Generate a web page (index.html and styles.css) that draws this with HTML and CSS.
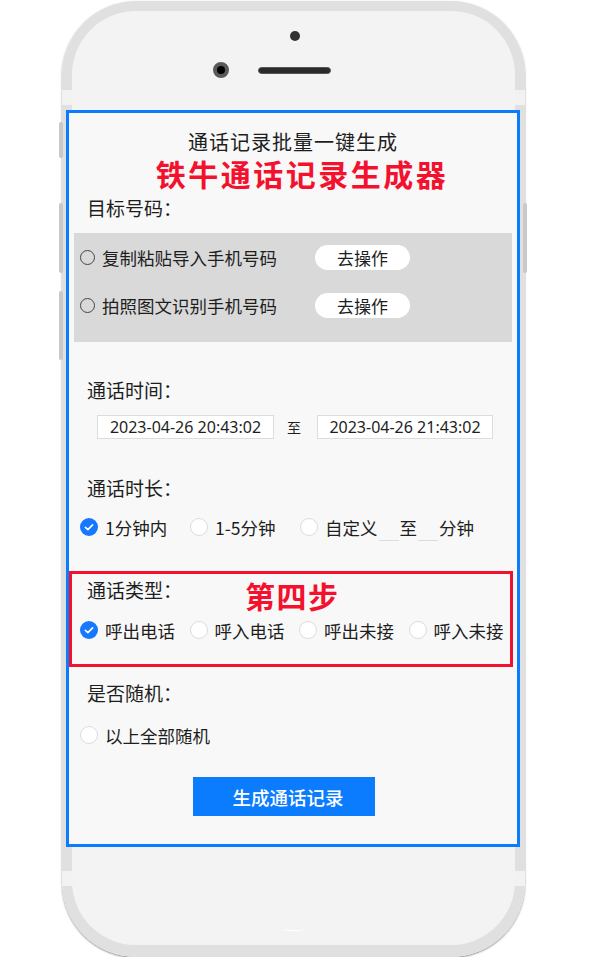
FILE: index.html
```html
<!DOCTYPE html>
<html lang="zh-CN">
<head>
    <meta charset="UTF-8">
    <meta name="viewport" content="width=device-width, initial-scale=1.0">
    <title>铁牛通话记录生成器</title>
    <link rel="stylesheet" href="styles.css">
</head>
<body>
    <div class="phone">
        <span class="side-btn btn-mute"></span>
        <span class="side-btn btn-vol-up"></span>
        <span class="side-btn btn-vol-down"></span>
        <span class="side-btn btn-power"></span>

        <div class="face">
            <div class="sensor"></div>
            <div class="earpiece">
                <span class="camera"></span>
                <span class="speaker"></span>
            </div>

            <div class="screen">
                <h1 class="title">通话记录批量一键生成</h1>
                <h2 class="brand">铁牛通话记录生成器</h2>

                <div class="label">目标号码：</div>
                <div class="import-box">
                    <div class="import-row">
                        <span class="ring"></span>
                        <span class="import-text">复制粘贴导入手机号码</span>
                        <button class="go-btn">去操作</button>
                    </div>
                    <div class="import-row">
                        <span class="ring"></span>
                        <span class="import-text">拍照图文识别手机号码</span>
                        <button class="go-btn">去操作</button>
                    </div>
                </div>

                <div class="label label-time">通话时间：</div>
                <div class="date-row">
                    <div class="date-box">2023-04-26 20:43:02</div>
                    <span class="to">至</span>
                    <div class="date-box date-end">2023-04-26 21:43:02</div>
                </div>

                <div class="label label-len">通话时长：</div>
                <div class="opts">
                    <label class="opt">
                        <svg class="dot-on" width="18" height="18" viewBox="0 0 18 18"><circle cx="9" cy="9" r="9" fill="#1677ff"/><path d="M5.4 9.3 L7.9 11.6 L12.6 6.9" stroke="#fff" stroke-width="1.6" fill="none" stroke-linecap="round" stroke-linejoin="round"/></svg>
                        1分钟内
                    </label>
                    <label class="opt"><span class="dot"></span>1-5分钟</label>
                    <label class="opt opt-custom">
                        <span class="dot"></span>自定义<span class="blank"></span>至<span class="blank"></span>分钟
                    </label>
                </div>

                <div class="step-box">
                    <div class="type-head">
                        <div class="label">通话类型：</div>
                        <div class="step">第四步</div>
                    </div>
                    <div class="opts type-opts">
                        <label class="opt">
                            <svg class="dot-on" width="18" height="18" viewBox="0 0 18 18"><circle cx="9" cy="9" r="9" fill="#1677ff"/><path d="M5.4 9.3 L7.9 11.6 L12.6 6.9" stroke="#fff" stroke-width="1.6" fill="none" stroke-linecap="round" stroke-linejoin="round"/></svg>
                            呼出电话
                        </label>
                        <label class="opt"><span class="dot"></span>呼入电话</label>
                        <label class="opt"><span class="dot"></span>呼出未接</label>
                        <label class="opt"><span class="dot"></span>呼入未接</label>
                    </div>
                </div>

                <div class="label label-random">是否随机：</div>
                <div class="opts random-opts">
                    <label class="opt opt-wide"><span class="dot"></span>以上全部随机</label>
                </div>

                <button class="gen-btn">生成通话记录</button>
            </div>

            <div class="home"></div>
        </div>
    </div>
</body>
</html>
```

FILE: styles.css
```css
/* page */
body {
    margin: 0;
    background: #fff;
    font-family: "Noto Sans CJK SC", "Noto Sans", sans-serif;
}

/* phone frame */
.phone {
    position: relative;
    width: 463px;
    height: 956px;
    margin: 1px 0 0 62px;
    padding: 10px 10px 12px;
    box-sizing: border-box;
    border-radius: 74px;
    background: linear-gradient(to bottom,
        #e0e0e0 0, #e0e0e0 89px,
        #f2f2f2 89px, #f2f2f2 104px,
        #e0e0e0 104px, #e0e0e0 870px,
        #f2f2f2 870px, #f2f2f2 885px,
        #e0e0e0 885px);
    box-shadow: 0 1px 2px rgba(0, 0, 0, 0.45);
}

.side-btn {
    position: absolute;
    width: 4px;
    background: #c9c9c9;
    border-radius: 2px;
}

.btn-mute { left: -3px; top: 121px; height: 36px; }
.btn-vol-up { left: -3px; top: 202px; height: 70px; }
.btn-vol-down { left: -3px; top: 290px; height: 69px; }
.btn-power { right: -2px; top: 202px; height: 70px; }

.face {
    height: 100%;
    background: #f3f3f3;
    border-radius: 64px;
    padding-top: 20px;
    box-sizing: border-box;
}

.sensor {
    width: 10px;
    height: 10px;
    margin-left: 218px;
    border-radius: 50%;
    background: #333;
}

.earpiece {
    display: flex;
    align-items: center;
    margin: 21px 0 0 141px;
    height: 16px;
}

.camera {
    width: 8px;
    height: 8px;
    border: 4px solid #5a5a5a;
    border-radius: 50%;
    background: #000;
}

.speaker {
    width: 71px;
    height: 5px;
    margin-left: 29px;
    border: 1px solid #555;
    border-radius: 4px;
    background: #2a2a2a;
}

/* screen */
.screen {
    width: 454px;
    height: 737px;
    margin: 32px 0 0 -6px;
    box-sizing: border-box;
    border: 3px solid #0c7cff;
    background: #f8f8f8;
    padding-top: 15px;
    color: #1e1e1e;
}

.title {
    margin: 0;
    font-size: 20px;
    font-weight: normal;
    line-height: 28px;
    text-align: center;
    letter-spacing: 1px;
}

.brand {
    margin: 2px 0 0;
    padding-left: 18px;
    font-size: 30px;
    font-weight: bold;
    line-height: 30px;
    text-align: center;
    letter-spacing: 2.5px;
    color: #f4112e;
}

.label {
    margin-top: 7px;
    padding-left: 18px;
    font-size: 19px;
    line-height: 26px;
}

/* target numbers */
.import-box {
    margin: 12px 5px 0;
    padding: 12px 0 24px 6px;
    background: #d9d9d9;
}

.import-row {
    display: flex;
    align-items: center;
    height: 25px;
}

.import-row + .import-row {
    margin-top: 23px;
}

.ring {
    width: 13px;
    height: 13px;
    border: 1px solid #444;
    border-radius: 50%;
}

.import-text {
    width: 175px;
    margin-left: 7px;
    font-size: 17.5px;
    white-space: nowrap;
}

.go-btn {
    width: 95px;
    height: 25px;
    margin-left: 38px;
    padding: 0;
    border: none;
    border-radius: 13px;
    background: #fff;
    color: #1e1e1e;
    font-family: inherit;
    font-size: 17px;
}

/* time range */
.label-time {
    margin-top: 35px;
}

.date-row {
    display: flex;
    align-items: center;
    margin-top: 12px;
    padding-left: 28px;
}

.date-box {
    width: 177px;
    height: 24px;
    box-sizing: border-box;
    border: 1px solid #dcdcdc;
    background: #fff;
    font-family: "Noto Sans", sans-serif;
    font-size: 16px;
    line-height: 22px;
    text-align: center;
}

.date-end {
    width: 176px;
}

.to {
    margin: 0 16px 0 13px;
    font-size: 14px;
}

/* radio rows */
.label-len {
    margin-top: 36px;
}

.opts {
    display: flex;
    align-items: center;
    height: 24px;
    margin-top: 14px;
    padding-left: 11px;
}

.opt {
    display: flex;
    align-items: center;
    gap: 7px;
    width: 110px;
    height: 24px;
    flex-shrink: 0;
    font-size: 17.5px;
    white-space: nowrap;
}

.dot,
.dot-on {
    flex-shrink: 0;
}

.dot {
    width: 18px;
    height: 18px;
    box-sizing: border-box;
    border: 1px solid #dcdcdc;
    border-radius: 50%;
    background: #fff;
}

.opt-custom {
    width: auto;
    gap: 0;
}

.opt-custom .dot {
    margin-right: 7px;
}

.blank {
    align-self: flex-start;
    width: 20px;
    height: 26px;
    margin: 0 1px;
    box-sizing: border-box;
    border-bottom: 1px solid #dcdcdc;
}

/* highlighted step */
.step-box {
    margin: 32px 4px 0 0;
    padding: 3px 0 22px 8px;
    border: 3px solid #f4112e;
}

.type-head {
    display: flex;
    align-items: flex-start;
}

.type-head .label {
    margin-top: 0;
    padding-left: 7px;
}

.step {
    margin: 1px 0 0 63px;
    font-size: 30px;
    font-weight: bold;
    line-height: 34px;
    letter-spacing: 1.5px;
    color: #f4112e;
}

.type-opts {
    margin-top: 6px;
    padding-left: 0;
}

.type-opts .opt {
    width: 109.5px;
}

/* random */
.label-random {
    margin-top: 13px;
}

.random-opts {
    margin-top: 17px;
}

.opt-wide {
    width: auto;
}

.gen-btn {
    display: block;
    width: 182px;
    height: 39px;
    margin: 30px 0 0 124px;
    padding: 0 0 0 8px;
    border: none;
    background: #0c7cff;
    color: #fff;
    font-family: inherit;
    font-size: 18.5px;
    font-weight: 500;
}

.home {
    width: 22px;
    height: 3px;
    margin: 80px auto 0;
    border-bottom: 1px solid #fff;
    border-radius: 50%;
}
```
